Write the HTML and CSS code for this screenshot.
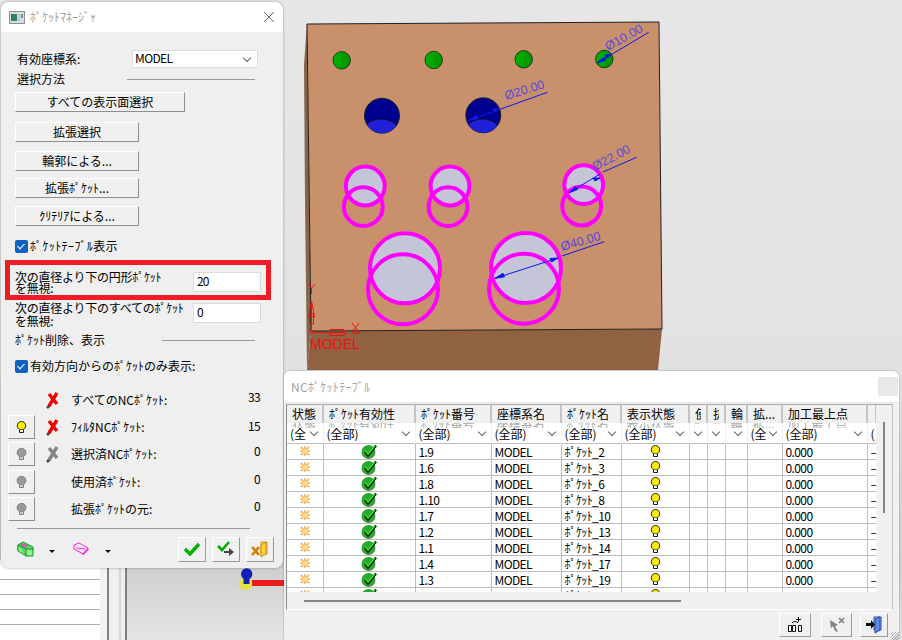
FILE: index.html
```html
<!DOCTYPE html>
<html lang="ja">
<head>
  <meta charset="UTF-8">
  <title>ポケットマネージャ</title>
  <link rel="stylesheet" href="styles.css">
</head>
<body>

<!-- shared icons -->
<svg class="defs" width="0" height="0">
  <defs>
    <symbol id="i-bulb" viewBox="0 0 11 13">
      <circle cx="5.5" cy="4.7" r="4.2" fill="currentColor" stroke="#222" stroke-width="1"/>
      <path d="M3.5 9v2.5h4V9" fill="#fff" stroke="#222" stroke-width="1"/>
    </symbol>
    <symbol id="i-bulb-off" viewBox="0 0 11 13">
      <circle cx="5.5" cy="4.7" r="4.4" fill="#999" stroke="#808080" stroke-width="1"/>
      <path d="M3.5 9v2.5h4V9" fill="#ccc" stroke="#808080" stroke-width="1"/>
    </symbol>
    <symbol id="i-x" viewBox="0 0 13 17">
      <path d="M1 16l3-3" stroke="#444" stroke-width="2.5" fill="none"/>
      <path d="M11 1L3 14M3 2l8 10" stroke="currentColor" stroke-width="3.4" fill="none"/>
    </symbol>
    <symbol id="i-status" viewBox="0 0 11 11">
      <path d="M5.5 0v11M0 5.5h11M1 1l9 9M10 1l-9 9" stroke="#f58a00" stroke-width="1.2" fill="none"/>
      <rect x="3.5" y="3.5" width="4" height="4" fill="#ffe98a"/>
    </symbol>
    <symbol id="i-valid" viewBox="0 0 16 15">
      <circle cx="7.500" cy="8" r="7" fill="#2fa32f"/>
      <path d="M4 7.5l3 4 8-10" stroke="#101010" stroke-width="2.4" fill="none"/>
      <path d="M4 6.5l3 3.6 7-8.6" stroke="#22f022" stroke-width="1.6" fill="none"/>
    </symbol>
  </defs>
</svg>

<!-- model view behind the windows -->
<svg class="viewport" width="902" height="640" viewBox="0 0 902 640">
  <defs>
    <linearGradient id="g-back" x1="0" y1="0" x2="0" y2="1">
      <stop offset="0" stop-color="#e6e6e6"/>
      <stop offset="0.58" stop-color="#e2e2e2"/>
      <stop offset="0.89" stop-color="#cfcfcf"/>
      <stop offset="1" stop-color="#e6e6e6"/>
    </linearGradient>
    <linearGradient id="g-green" x1="0" y1="0" x2="1" y2="0">
      <stop offset="0" stop-color="#00b400"/>
      <stop offset="1" stop-color="#009000"/>
    </linearGradient>
    <clipPath id="c-blue1"><circle cx="382" cy="115.7" r="17.5"/></clipPath>
    <clipPath id="c-blue2"><circle cx="483.3" cy="115.3" r="17.5"/></clipPath>
  </defs>
  <rect width="902" height="640" fill="url(#g-back)"/>

  <!-- sheet behind the dialog, lower left -->
  <rect x="0" y="560" width="100" height="80" fill="#fff"/>
  <rect x="100" y="560" width="8" height="80" fill="#f2f2f2"/>
  <path d="M0 579.500h100M0 594.500h100M0 609.500h100M0 624.500h100" stroke="#aaa" stroke-width="1"/>
  <rect x="107" y="560" width="2" height="80" fill="#808080"/>
  <rect x="109" y="560" width="16" height="80" fill="#efefef"/>
  <rect x="119.500" y="560" width="1" height="80" fill="#c0c0c0"/>
  <rect x="125" y="560" width="2" height="80" fill="#808080"/>

  <!-- block -->
  <path d="M307 24L304 65L305 200L307 370L311 331Z" fill="#86654a"/>
  <path d="M311 331L662 329L658 370L307 370Z" fill="#916242"/>
  <path d="M307 24L659 22L662 329L311 331Z" fill="#c8916c" stroke="#222" stroke-width="1"/>

  <!-- 10mm holes -->
  <g fill="url(#g-green)" stroke="#1e3a1e" stroke-width="1">
    <circle cx="341.700" cy="60.300" r="8.700"/>
    <circle cx="433.700" cy="60" r="8.700"/>
    <circle cx="523.700" cy="59.300" r="8.700"/>
    <circle cx="604.300" cy="59" r="8.700"/>
  </g>

  <!-- 20mm holes -->
  <circle cx="382" cy="115.700" r="17.500" fill="#00008e" stroke="#222" stroke-width="1"/>
  <circle cx="381" cy="141" r="22" fill="#2020d8" stroke="#111" stroke-width="0.8" clip-path="url(#c-blue1)"/>
  <circle cx="483.300" cy="115.300" r="17.500" fill="#00008e" stroke="#222" stroke-width="1"/>
  <circle cx="482.500" cy="141" r="22" fill="#2020d8" stroke="#111" stroke-width="0.8" clip-path="url(#c-blue2)"/>

  <!-- highlighted holes -->
  <g fill="#c5c5d8">
    <circle cx="365.300" cy="186" r="19.400"/>
    <circle cx="450" cy="186" r="19.400"/>
    <circle cx="583.700" cy="184.700" r="19.400"/>
    <circle cx="405" cy="268.300" r="35"/>
    <circle cx="526" cy="268" r="35"/>
  </g>
  <g fill="none" stroke="#ff00ff" stroke-width="4">
    <circle cx="365.300" cy="186" r="19.400"/>
    <circle cx="363.300" cy="206.700" r="19.400"/>
    <circle cx="450" cy="186" r="19.400"/>
    <circle cx="448" cy="206.700" r="19.400"/>
    <circle cx="583.700" cy="184.700" r="19.400"/>
    <circle cx="581.700" cy="206" r="19.400"/>
    <circle cx="405" cy="268.300" r="35"/>
    <circle cx="403" cy="289.300" r="35"/>
    <circle cx="526" cy="268" r="35"/>
    <circle cx="524" cy="288.700" r="35"/>
  </g>

  <!-- dimensions -->
  <g stroke="#0a18f0" stroke-width="1" fill="#0a18f0">
    <path d="M596.700 63.300L648.700 32.300" fill="none"/>
    <path d="M597 63l7-6 2 3zM612 54l-7 1 2 3z"/>
    <path d="M468.300 120.700L547.300 92.300" fill="none"/>
    <path d="M468.500 120.500l8-5 1.500 3zM500 108.500l-7 .5 1.500 3z"/>
    <path d="M569.300 192.700L600 174M603 172L636.700 157.300" fill="none"/>
    <path d="M569.500 192.500l6-6 2 3zM600 178l-7 0 2 3z"/>
    <path d="M495 278.300L558 258M562 256L604.300 241.700" fill="none"/>
    <path d="M495 278.300l8-5 1.500 3.500zM558 258l-8 .5 1.500 3.500z"/>
  </g>
  <g class="dim-text">
    <text transform="translate(608 51) rotate(-29)">Ø10.00</text>
    <text transform="translate(506 100) rotate(-17)">Ø20.00</text>
    <text transform="translate(595 171) rotate(-28)">Ø22.00</text>
    <text transform="translate(562 251) rotate(-16)">Ø40.00</text>
  </g>

  <!-- triad -->
  <g fill="none" stroke="#f01010" stroke-width="1">
    <path d="M311.500 332V301M308.500 317l3-16 3 16zM308.500 314h6M309.500 315v9h4v-9"/>
    <path d="M308 284l3.500 4 3.500-4M311.500 288v6"/>
    <path d="M314 332.500H345M330 329.500h13l4 3-4 3h-13z"/>
    <path d="M352 323l7 9M359 323l-7 9M351 333h9"/>
    <circle cx="311.500" cy="332" r="2"/>
  </g>
  <text class="triad-text" x="310" y="349">MODEL</text>

  <!-- handle under the dialog -->
  <rect x="252" y="580" width="32" height="6" fill="#ea1c1c"/>
  <circle cx="245.700" cy="583.500" r="6.500" fill="#e6e03c"/>
  <circle cx="246.700" cy="574" r="5.700" fill="#1020b4"/>
  <rect x="243.500" y="574" width="6" height="10" fill="#1020b4"/>
</svg>

<!-- pocket manager dialog -->
<div class="dialog">
  <div class="titlebar">
    <svg class="app-icon" width="16" height="13" viewBox="0 0 16 13">
      <rect x="0.500" y="0.500" width="15" height="12" fill="#d8dee0" stroke="#8a9094"/>
      <rect x="2" y="3" width="6" height="7" fill="#2f7f6a"/>
      <rect x="9" y="3" width="2" height="7" fill="#b4d0c4"/>
      <rect x="12" y="3" width="2" height="4" fill="#6a8fb0"/>
    </svg>
    <span class="title-text">ﾎﾟｹｯﾄﾏﾈｰｼﾞｬ</span>
    <svg class="close-x" width="12" height="12" viewBox="0 0 12 12">
      <path d="M1 1l10 10M11 1L1 11" stroke="#666" stroke-width="1" fill="none"/>
    </svg>
  </div>

  <div class="dialog-body">
    <div class="field-row">
      <span class="field-label">有効座標系:</span>
      <div class="select-box">MODEL<span class="chev"></span></div>
    </div>
    <div class="group-row">
      <span class="group-label">選択方法</span>
      <span class="group-line line-a"></span>
    </div>

    <div class="btn btn-wide">すべての表示面選択</div>
    <div class="btn btn-mid gap-10">拡張選択</div>
    <div class="btn btn-mid gap-9">輪郭による...</div>
    <div class="btn btn-mid gap-7">拡張ﾎﾟｹｯﾄ...</div>
    <div class="btn btn-mid gap-8">ｸﾘﾃﾘｱによる...</div>

    <div class="check-row gap-12 wide-kana"><span class="check"></span>ﾎﾟｹｯﾄﾃｰﾌﾞﾙ表示</div>

    <div class="ignore-box">
      <div class="ignore-label">次の直径より下の円形ﾎﾟｹｯﾄ<br>を無視:</div>
      <div class="num-input">20</div>
    </div>
    <div class="ignore-row">
      <div class="ignore-label">次の直径より下のすべてのﾎﾟｹｯﾄ<br>を無視:</div>
      <div class="num-input">0</div>
    </div>

    <div class="group-row delete-row">
      <span class="group-label">ﾎﾟｹｯﾄ削除、表示</span>
      <span class="group-line line-b"></span>
    </div>
    <div class="check-row gap-10"><span class="check"></span>有効方向からのﾎﾟｹｯﾄのみ表示:</div>

    <div class="stats">
      <div class="stat-row">
        <span class="bulb-slot"></span>
        <svg class="stat-x red"><use href="#i-x"/></svg>
        <span class="stat-label">すべてのNCﾎﾟｹｯﾄ:</span>
        <span class="stat-val">33</span>
      </div>
      <div class="stat-row">
        <span class="bulb-btn"><svg class="bulb on"><use href="#i-bulb"/></svg></span>
        <svg class="stat-x red"><use href="#i-x"/></svg>
        <span class="stat-label">ﾌｨﾙﾀNCﾎﾟｹｯﾄ:</span>
        <span class="stat-val val-low">15</span>
      </div>
      <div class="stat-row">
        <span class="bulb-btn"><svg class="bulb"><use href="#i-bulb-off"/></svg></span>
        <svg class="stat-x grey"><use href="#i-x"/></svg>
        <span class="stat-label">選択済NCﾎﾟｹｯﾄ:</span>
        <span class="stat-val">0</span>
      </div>
      <div class="stat-row gap-1">
        <span class="bulb-btn"><svg class="bulb"><use href="#i-bulb-off"/></svg></span>
        <span class="stat-x"></span>
        <span class="stat-label">使用済ﾎﾟｹｯﾄ:</span>
        <span class="stat-val">0</span>
      </div>
      <div class="stat-row">
        <span class="bulb-btn"><svg class="bulb"><use href="#i-bulb-off"/></svg></span>
        <span class="stat-x"></span>
        <span class="stat-label">拡張ﾎﾟｹｯﾄの元:</span>
        <span class="stat-val">0</span>
      </div>
    </div>

    <div class="foot-line"></div>

    <div class="dialog-foot">
      <svg class="tool-icon" width="17" height="16" viewBox="0 0 17 16">
        <path d="M1 4l5-3 10 5v3l-5 6-10-6z" fill="#62d862" stroke="#0a9a2a"/>
        <path d="M9 8h7v7H9zM1 4l8 4M1 4v6l8 5" fill="#8cf08c" stroke="#0a9a2a"/>
        <path d="M4 4l3-1 3 2-2 1z" fill="none" stroke="#ff20e0"/>
      </svg>
      <span class="caret first"></span>
      <svg class="tool-icon" width="16" height="14" viewBox="0 0 16 14">
        <path d="M1 3l5-2 9 5-5 6-9-5zM3 6l9 1M10 12l5-6v2l-5 5z" fill="#f4eef4" stroke="#ff20e0"/>
      </svg>
      <span class="caret second"></span>
      <span class="foot-spacer"></span>
      <span class="icon-btn">
        <svg width="18" height="14" viewBox="0 0 18 14"><path d="M2 7l5 5L16 2" stroke="#00b000" stroke-width="3.4" fill="none"/></svg>
      </span>
      <span class="icon-btn">
        <svg width="18" height="16" viewBox="0 0 18 16"><path d="M1 5l4 4 7-8" stroke="#00b000" stroke-width="2.6" fill="none"/><path d="M7 10h5V7l5 4-5 4v-3H7z" fill="#444"/></svg>
      </span>
      <span class="icon-btn">
        <svg width="18" height="18" viewBox="0 0 18 18"><path d="M10 2h6v12h-6z" fill="none" stroke="#d48a00"/><path d="M10 5l5-3v12l-5 3z" fill="#ffd23c" stroke="#d48a00"/><path d="M1 7l7 8M8 7l-7 8" stroke="#d87a00" stroke-width="2.6" fill="none"/></svg>
      </span>
    </div>
  </div>
</div>

<!-- pocket table window -->
<div class="table-window">
  <div class="table-title">
    <span class="table-title-text">NCﾎﾟｹｯﾄﾃｰﾌﾞﾙ</span>
    <span class="table-close"></span>
  </div>
  <div class="table-frame">
    <div class="table-clip">
      <table class="pockets">
        <colgroup>
          <col class="c1"><col class="c2"><col class="c3"><col class="c4"><col class="c5"><col class="c6">
          <col class="c7"><col class="c8"><col class="c9"><col class="c10"><col class="c11"><col class="c12">
        </colgroup>
        <thead>
          <tr class="head">
            <th>状態</th><th>ﾎﾟｹｯﾄ有効性</th><th>ﾎﾟｹｯﾄ番号</th><th>座標系名</th><th>ﾎﾟｹｯﾄ名</th><th>表示状態</th>
            <th><span class="cut">使</span></th><th><span class="cut">抜</span></th><th>輪</th><th>拡...</th><th>加工最上点</th><th></th>
          </tr>
          <tr class="filter">
            <td><div class="ghost">状態</div><div class="pick">(全<span class="chev"></span></div></td>
            <td><div class="ghost">ﾎﾟｹｯﾄ有効性</div><div class="pick">(全部)<span class="chev"></span></div></td>
            <td><div class="ghost">ﾎﾟｹｯﾄ番号</div><div class="pick">(全部)<span class="chev"></span></div></td>
            <td><div class="ghost">座標系名</div><div class="pick">(全部)<span class="chev"></span></div></td>
            <td><div class="ghost">ﾎﾟｹｯﾄ名</div><div class="pick">(全部)<span class="chev"></span></div></td>
            <td><div class="ghost">表示状態</div><div class="pick">(全部)<span class="chev"></span></div></td>
            <td><div class="ghost"><span class="cut">使</span></div><div class="pick"><span class="chev"></span></div></td>
            <td><div class="ghost"><span class="cut">抜</span></div><div class="pick"><span class="chev"></span></div></td>
            <td><div class="ghost">輪</div><div class="pick"><span class="chev"></span></div></td>
            <td><div class="ghost">拡...</div><div class="pick">(全<span class="chev"></span></div></td>
            <td><div class="ghost">加工最上点</div><div class="pick">(全部)<span class="chev"></span></div></td>
            <td><div class="ghost"></div><div class="pick">(</div></td>
          </tr>
        </thead>
        <tbody>
          <tr><td class="ico"><svg class="st"><use href="#i-status"/></svg></td><td class="ico"><svg class="ok"><use href="#i-valid"/></svg></td><td>1.9</td><td>MODEL</td><td>ﾎﾟｹｯﾄ_2</td><td class="ico"><svg class="bulb on"><use href="#i-bulb"/></svg></td><td></td><td></td><td></td><td></td><td>0.000</td><td>–</td></tr>
          <tr><td class="ico"><svg class="st"><use href="#i-status"/></svg></td><td class="ico"><svg class="ok"><use href="#i-valid"/></svg></td><td>1.6</td><td>MODEL</td><td>ﾎﾟｹｯﾄ_3</td><td class="ico"><svg class="bulb on"><use href="#i-bulb"/></svg></td><td></td><td></td><td></td><td></td><td>0.000</td><td>–</td></tr>
          <tr><td class="ico"><svg class="st"><use href="#i-status"/></svg></td><td class="ico"><svg class="ok"><use href="#i-valid"/></svg></td><td>1.8</td><td>MODEL</td><td>ﾎﾟｹｯﾄ_6</td><td class="ico"><svg class="bulb on"><use href="#i-bulb"/></svg></td><td></td><td></td><td></td><td></td><td>0.000</td><td>–</td></tr>
          <tr><td class="ico"><svg class="st"><use href="#i-status"/></svg></td><td class="ico"><svg class="ok"><use href="#i-valid"/></svg></td><td>1.10</td><td>MODEL</td><td>ﾎﾟｹｯﾄ_8</td><td class="ico"><svg class="bulb on"><use href="#i-bulb"/></svg></td><td></td><td></td><td></td><td></td><td>0.000</td><td>–</td></tr>
          <tr><td class="ico"><svg class="st"><use href="#i-status"/></svg></td><td class="ico"><svg class="ok"><use href="#i-valid"/></svg></td><td>1.7</td><td>MODEL</td><td>ﾎﾟｹｯﾄ_10</td><td class="ico"><svg class="bulb on"><use href="#i-bulb"/></svg></td><td></td><td></td><td></td><td></td><td>0.000</td><td>–</td></tr>
          <tr><td class="ico"><svg class="st"><use href="#i-status"/></svg></td><td class="ico"><svg class="ok"><use href="#i-valid"/></svg></td><td>1.2</td><td>MODEL</td><td>ﾎﾟｹｯﾄ_13</td><td class="ico"><svg class="bulb on"><use href="#i-bulb"/></svg></td><td></td><td></td><td></td><td></td><td>0.000</td><td>–</td></tr>
          <tr><td class="ico"><svg class="st"><use href="#i-status"/></svg></td><td class="ico"><svg class="ok"><use href="#i-valid"/></svg></td><td>1.1</td><td>MODEL</td><td>ﾎﾟｹｯﾄ_14</td><td class="ico"><svg class="bulb on"><use href="#i-bulb"/></svg></td><td></td><td></td><td></td><td></td><td>0.000</td><td>–</td></tr>
          <tr><td class="ico"><svg class="st"><use href="#i-status"/></svg></td><td class="ico"><svg class="ok"><use href="#i-valid"/></svg></td><td>1.4</td><td>MODEL</td><td>ﾎﾟｹｯﾄ_17</td><td class="ico"><svg class="bulb on"><use href="#i-bulb"/></svg></td><td></td><td></td><td></td><td></td><td>0.000</td><td>–</td></tr>
          <tr><td class="ico"><svg class="st"><use href="#i-status"/></svg></td><td class="ico"><svg class="ok"><use href="#i-valid"/></svg></td><td>1.3</td><td>MODEL</td><td>ﾎﾟｹｯﾄ_19</td><td class="ico"><svg class="bulb on"><use href="#i-bulb"/></svg></td><td></td><td></td><td></td><td></td><td>0.000</td><td>–</td></tr>
          <tr><td class="ico"><svg class="st"><use href="#i-status"/></svg></td><td class="ico"><svg class="ok"><use href="#i-valid"/></svg></td><td>1.5</td><td>MODEL</td><td>ﾎﾟｹｯﾄ_21</td><td class="ico"><svg class="bulb on"><use href="#i-bulb"/></svg></td><td></td><td></td><td></td><td></td><td>0.000</td><td>–</td></tr>
        </tbody>
      </table>
    </div>
    <div class="vscroll"><span class="vthumb"></span></div>
    <div class="hscroll"><span class="hthumb"></span></div>
  </div>
  <div class="table-foot">
    <span class="tbl-btn b1">
      <svg width="16" height="16" viewBox="0 0 16 16"><path d="M1.500 8.500h3v6h-3zM5.500 8.500h3v6h-3zM11.500 8.500h3v6h-3z" fill="#fff" stroke="#111"/><path d="M5 6a3.500 3 0 0 1 6 0" fill="none" stroke="#111"/><path d="M9 2.500h5M11.500 0v5" stroke="#111" fill="none"/></svg>
    </span>
    <span class="tbl-btn b2">
      <svg width="16" height="16" viewBox="0 0 16 16"><path d="M1 3l8 5-3 1 3 6-3-1-2-5-2 2z" fill="#808080"/><path d="M10 1l5 5M15 1l-5 5" stroke="#808080" stroke-width="1.600"/></svg>
    </span>
    <span class="tbl-btn b3">
      <svg width="18" height="18" viewBox="0 0 18 18"><path d="M9 1h7v13H9z" fill="#cfe0ff" stroke="#2048a8"/><path d="M10 3l5-2v13l-5 3z" fill="#5a8ce8" stroke="#2048a8"/><path d="M1 7h5V4l4 4.500-4 4.500v-3H1z" fill="#111"/></svg>
    </span>
  </div>
  <div class="grip"></div>
</div>

</body>
</html>
```

FILE: styles.css
```css
html, body {
  margin: 0;
  padding: 0;
}

body {
  position: relative;
  width: 902px;
  height: 640px;
  overflow: hidden;
  font-family: "Noto Sans CJK JP", "Liberation Sans", sans-serif;
  font-size: 12px;
  line-height: 14px;
  color: #000;
  background: #e4e4e4;
}

.defs {
  position: absolute;
}

.viewport {
  position: absolute;
  left: 0;
  top: 0;
  display: block;
}

.dim-text text {
  font-family: "Liberation Sans", sans-serif;
  font-size: 12.5px;
  fill: #5a48d8;
}

.triad-text {
  font-family: "Liberation Sans", sans-serif;
  font-size: 14px;
  fill: #f01010;
}

/* dialog */
.dialog {
  position: absolute;
  left: 1px;
  top: 2px;
  width: 282px;
  height: 566px;
  border-radius: 8px;
  background: #efefef;
  box-shadow: 0 0 3px rgba(0, 0, 0, 0.35);
  overflow: hidden;
}

.titlebar {
  display: flex;
  align-items: center;
  height: 30px;
  padding: 0 8px;
  background: #fff;
}

.app-icon {
  flex: none;
}

.title-text {
  margin-left: 5px;
  color: #a0a0a0;
}

.close-x {
  margin-left: auto;
}

.dialog-body {
  padding: 18px 0 0 14px;
}

.field-row {
  display: flex;
  align-items: center;
  height: 18px;
  padding-left: 2px;
}

.field-label {
  width: 115px;
}

.select-box {
  position: relative;
  box-sizing: border-box;
  width: 126px;
  height: 18px;
  padding: 0 0 0 2px;
  letter-spacing: -0.6px;
  background: #fff;
  border: 1px solid #dcdcdc;
}

.select-box .chev {
  right: 7px;
  top: 4px;
}

.chev {
  position: absolute;
  width: 5px;
  height: 5px;
  border-right: 1px solid #666;
  border-bottom: 1px solid #666;
  transform: rotate(45deg);
}

.group-row {
  display: flex;
  align-items: center;
  width: 240px;
  height: 18px;
  margin-top: 2px;
  padding-left: 2px;
  box-sizing: border-box;
}

.group-line {
  height: 1px;
  margin-left: auto;
  background: #999;
}

.line-a {
  width: 128px;
}

.delete-row {
  height: 16px;
  margin-top: 5px;
  padding-left: 0;
}

.line-b {
  width: 93px;
}

.btn {
  box-sizing: border-box;
  height: 20px;
  line-height: 17px;
  text-align: center;
  background: #f0f0f0;
  border: 1px solid;
  border-color: #fff #8e8e8e #8e8e8e #fff;
}

.btn-wide {
  width: 170px;
  margin-top: 4px;
}

.btn-mid {
  width: 124px;
}

.gap-7 { margin-top: 7px; }
.gap-8 { margin-top: 8px; }
.gap-9 { margin-top: 9px; }
.gap-10 { margin-top: 10px; }
.gap-12 { margin-top: 12px; }

.check-row {
  display: flex;
  align-items: center;
  height: 16px;
}

.wide-kana {
  letter-spacing: 0.4px;
}

.check {
  position: relative;
  box-sizing: border-box;
  width: 13px;
  height: 13px;
  margin-right: 2px;
  border-radius: 2px;
  background: #0f62c0;
}

.check::after {
  content: "";
  position: absolute;
  left: 4px;
  top: 2px;
  width: 3px;
  height: 6px;
  border-right: 1px solid #fff;
  border-bottom: 1px solid #fff;
  transform: rotate(45deg);
}

.ignore-box {
  display: flex;
  box-sizing: border-box;
  width: 266px;
  height: 40px;
  margin: 6px 0 0 -10px;
  padding-left: 5px;
  border: 5px solid #ee1c25;
}

.ignore-row {
  display: flex;
  height: 26px;
  margin-top: 1px;
}

.ignore-label {
  width: 178px;
  line-height: 12px;
  letter-spacing: -0.25px;
  white-space: nowrap;
}

.ignore-box .ignore-label {
  padding-top: 6px;
  line-height: 11px;
}

.ignore-row .ignore-label {
  padding-top: 0;
  line-height: 13px;
}

.num-input {
  box-sizing: border-box;
  width: 68px;
  height: 20px;
  padding: 1px 0 0 3px;
  letter-spacing: -0.8px;
  background: #fff;
  border: 1px solid #dcdcdc;
}

.ignore-box .num-input {
  margin-top: 7px;
}

.ignore-row .num-input {
  margin-top: 2px;
}

.stats {
  display: flex;
  flex-direction: column;
  gap: 3px;
  width: 252px;
  margin: 14px 0 0 -7px;
}

.stat-row {
  display: flex;
  align-items: center;
  height: 24px;
}

.stat-row.gap-1 {
  margin-top: 1px;
}

.bulb-slot {
  width: 27px;
}

.bulb-btn {
  display: flex;
  align-items: center;
  justify-content: center;
  box-sizing: border-box;
  width: 27px;
  height: 24px;
  background: #f0f0f0;
  border: 1px solid;
  border-color: #fff #8e8e8e #8e8e8e #fff;
}

.bulb {
  width: 11px;
  height: 13px;
}

.bulb.on {
  color: #ffee00;
}

.stat-x {
  width: 13px;
  height: 17px;
  margin-left: 11px;
}

.stat-x.red {
  color: #ee0000;
}

.stat-x.grey {
  color: #868686;
}

.stat-label {
  margin-left: 12px;
}

.stat-val {
  position: relative;
  top: -3px;
  margin-left: auto;
  letter-spacing: -0.6px;
}

.stat-val.val-low {
  top: -1px;
}

.foot-line {
  width: 233px;
  height: 1px;
  margin: 7px 0 0 2px;
  background: #999;
}

.dialog-foot {
  display: flex;
  align-items: center;
  height: 26px;
  margin-top: 7px;
  padding-left: 2px;
}

.tool-icon {
  flex: none;
}

.caret {
  flex: none;
  width: 0;
  height: 0;
  margin-top: 4px;
  border-left: 3px solid transparent;
  border-right: 3px solid transparent;
  border-top: 3px solid #111;
}

.caret.first {
  margin-left: 15px;
  margin-right: 18px;
}

.caret.second {
  margin-left: 16px;
}

.foot-spacer {
  width: 67px;
}

.icon-btn {
  display: flex;
  align-items: center;
  justify-content: center;
  box-sizing: border-box;
  flex: none;
  width: 28px;
  height: 25px;
  margin-right: 6px;
  background: #f0f0f0;
  border: 1px solid;
  border-color: #fff #9a9a9a #9a9a9a #fff;
}

/* table window */
.table-window {
  position: absolute;
  left: 284px;
  top: 371px;
  width: 615px;
  height: 269px;
  background: #f0f0f0;
  border-radius: 6px 6px 0 0;
  box-shadow: 0 0 2px rgba(0, 0, 0, 0.4);
  overflow: hidden;
}

.table-title {
  display: flex;
  align-items: center;
  height: 31px;
  padding-left: 7px;
  background: #fff;
  border-bottom: 1px solid #e6e6e6;
}

.table-title-text {
  color: #a4a4a4;
  letter-spacing: 0.3px;
}

.table-close {
  width: 20px;
  height: 19px;
  margin: 0 1px 0 auto;
  background: #e8e8e8;
}

.table-frame {
  position: relative;
  box-sizing: border-box;
  width: 607px;
  height: 206px;
  margin: 1px 0 0 2px;
  border-left: 1px solid #8a8a8a;
  border-top: 1px solid #a8a8a8;
  border-right: 1px solid #c0c0c0;
  border-bottom: 1px solid #fff;
}

.table-clip {
  width: 589px;
  height: 187px;
  overflow: hidden;
  background: #fff;
}

.pockets {
  width: 589px;
  table-layout: fixed;
  border-collapse: collapse;
  white-space: nowrap;
}

.c1 { width: 36px; }
.c2 { width: 92px; }
.c3 { width: 76px; }
.c4 { width: 70px; }
.c5 { width: 60px; }
.c6 { width: 68px; }
.c7 { width: 18px; }
.c8 { width: 18px; }
.c9 { width: 22px; }
.c10 { width: 35px; }
.c11 { width: 85px; }
.c12 { width: 9px; }

.pockets th,
.pockets td {
  padding: 0 0 0 3px;
  overflow: hidden;
}

.pockets tr.head {
  height: 18px;
}

.pockets tr.head th {
  font-weight: normal;
  text-align: left;
  background: #f0f0f0;
  border-right: 2px solid #c4c4c4;
  font-size: 12px;
  line-height: 14px;
  padding-left: 5px;
}

.cut {
  display: inline-block;
  width: 6px;
  overflow: hidden;
  vertical-align: top;
}

.pockets tr.filter {
  height: 20px;
}

.pockets tr.filter td {
  padding: 0;
  border-right: 1px solid #f0f0f0;
  vertical-align: top;
  background: #fff;
}

.ghost {
  height: 5px;
  padding-left: 5px;
  overflow: hidden;
  color: #a8a8a8;
  line-height: 1px;
  white-space: nowrap;
}

.pick {
  position: relative;
  height: 14px;
  padding-left: 3px;
  line-height: 12px;
}

.pick .chev {
  right: 6px;
  top: 1px;
}

.pockets tbody tr {
  height: 16px;
}

.pockets tbody td {
  box-sizing: border-box;
  height: 16px;
  line-height: 13px;
  letter-spacing: -0.6px;
  border: 1px solid #bcbcbc;
  border-left: 0;
  border-bottom: 0;
}

.pockets tbody td.ico {
  padding: 0;
  text-align: center;
  line-height: 0;
}

.st {
  width: 10px;
  height: 10px;
}

.ok {
  width: 16px;
  height: 15px;
}

.pockets .bulb {
  vertical-align: middle;
}

.vscroll {
  position: absolute;
  left: 589px;
  top: 0;
  width: 16px;
  height: 187px;
  background: #f0f0f0;
}

.vthumb {
  position: absolute;
  left: 7px;
  top: 17px;
  width: 2px;
  height: 91px;
  background: #858585;
}

.hscroll {
  position: relative;
  height: 17px;
  background: #f0f0f0;
}

.hthumb {
  position: absolute;
  left: 17px;
  top: 8px;
  width: 377px;
  height: 2px;
  background: #858585;
}

.table-foot {
  display: flex;
  align-items: flex-start;
  height: 30px;
  margin-top: 3px;
  padding-left: 495px;
}

.tbl-btn {
  display: flex;
  align-items: center;
  justify-content: center;
  box-sizing: border-box;
  height: 24px;
  background: #f0f0f0;
  border: 1px solid;
  border-color: #fff #9a9a9a #9a9a9a #fff;
}

.b1 { width: 32px; }
.b2 { width: 31px; margin-left: 10px; }
.b3 { width: 28px; margin-left: 8px; }

.grip {
  position: absolute;
  right: 0;
  bottom: 0;
  width: 8px;
  height: 8px;
  background: repeating-linear-gradient(135deg, transparent 0 1px, #b0b0b0 1px 2px);
}
```
